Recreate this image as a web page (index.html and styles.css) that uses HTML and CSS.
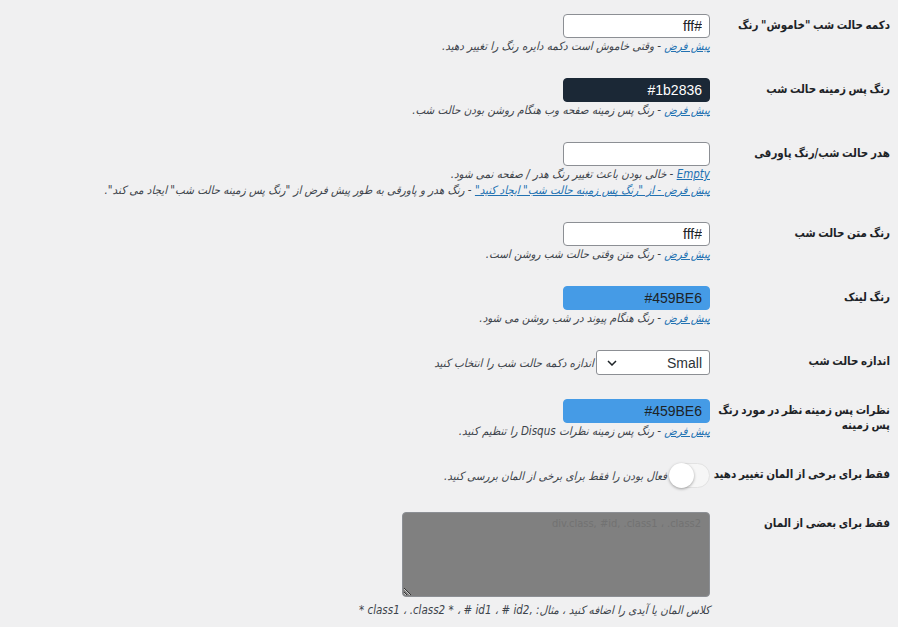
FILE: index.html
```html
<!DOCTYPE html>
<html lang="fa" dir="rtl">
<head>
<meta charset="utf-8">
<title>تنظیمات حالت شب</title>
<link rel="stylesheet" href="styles.css">
</head>
<body>
<div class="form">
  <div class="row">
    <div class="th">دکمه حالت شب "خاموش" رنگ</div>
    <div class="td">
      <input class="field" type="text" value="#fff">
      <p class="desc"><a href="#">پیش فرض</a> - وقتی خاموش است دکمه دایره رنگ را تغییر دهید.</p>
    </div>
  </div>
  <div class="row">
    <div class="th">رنگ پس زمینه حالت شب</div>
    <div class="td">
      <input class="field dark" type="text" value="#1b2836">
      <p class="desc"><a href="#">پیش فرض</a> - رنگ پس زمینه صفحه وب هنگام روشن بودن حالت شب.</p>
    </div>
  </div>
  <div class="row">
    <div class="th">هدر حالت شب/رنگ پاورقی</div>
    <div class="td">
      <input class="field" type="text" value="">
      <p class="desc"><a href="#">Empty</a> - خالی بودن باعث تغییر رنگ هدر / صفحه نمی شود.</p>
      <p class="desc"><a href="#">پیش فرض - از "رنگ پس زمینه حالت شب" ایجاد کنید"</a> - رنگ هدر و پاورقی به طور پیش فرض از "رنگ پس زمینه حالت شب" ایجاد می کند".</p>
    </div>
  </div>
  <div class="row">
    <div class="th">رنگ متن حالت شب</div>
    <div class="td">
      <input class="field" type="text" value="#fff">
      <p class="desc"><a href="#">پیش فرض</a> - رنگ متن وقتی حالت شب روشن است.</p>
    </div>
  </div>
  <div class="row">
    <div class="th">رنگ لینک</div>
    <div class="td">
      <input class="field blue" type="text" value="#459BE6">
      <p class="desc"><a href="#">پیش فرض</a> - رنگ هنگام پیوند در شب روشن می شود.</p>
    </div>
  </div>
  <div class="row">
    <div class="th">اندازه حالت شب</div>
    <div class="td inline">
      <div class="select">
        <span class="select-val">Small</span>
        <svg class="chev" width="10" height="6" viewBox="0 0 10 6"><path d="M1 1 L5 5 L9 1" fill="none" stroke="#1d2327" stroke-width="1.5"/></svg>
      </div>
      <span class="desc side">اندازه دکمه حالت شب را انتخاب کنید</span>
    </div>
  </div>
  <div class="row">
    <div class="th">نظرات پس زمینه نظر در مورد رنگ<br>پس زمینه</div>
    <div class="td">
      <input class="field blue" type="text" value="#459BE6">
      <p class="desc"><a href="#">پیش فرض</a> - رنگ پس زمینه نظرات Disqus را تنظیم کنید.</p>
    </div>
  </div>
  <div class="row">
    <div class="th">فقط برای برخی از المان تغییر دهید</div>
    <div class="td inline">
      <span class="toggle"><span class="knob"></span></span>
      <span class="desc side">فعال بودن را فقط برای برخی از المان بررسی کنید.</span>
    </div>
  </div>
  <div class="row">
    <div class="th">فقط برای بعضی از المان</div>
    <div class="td">
      <textarea class="area" placeholder="div.class, #id, .class1 ، .class2"></textarea>
      <p class="desc last">کلاس المان یا آیدی را اضافه کنید ، مثال: <span dir="ltr">* class1 ، .class2 * ، # id1 ، # id2,</span></p>
    </div>
  </div>
</div>
</body>
</html>
```

FILE: styles.css
```css
html, body {
  margin: 0;
  padding: 0;
  background: #f0f0f1;
}
body {
  direction: rtl;
  font-family: "DejaVu Sans Condensed", "DejaVu Sans", "Liberation Sans", sans-serif;
  color: #1d2327;
  font-size: 13px;
}
.form {
  padding: 2px 8px 0 0;
}
.row {
  display: flex;
  align-items: flex-start;
  padding: 12px 0;
}
.th {
  width: 170px;
  padding-left: 10px;
  padding-top: 4px;
  font-weight: bold;
  font-size: 11.5px;
  line-height: 15px;
  word-spacing: -1px;
  white-space: nowrap;
  flex: none;
}
.td {
  flex: 1;
}
.td.inline {
  display: flex;
  align-items: center;
  gap: 2px;
}
.field {
  display: block;
  box-sizing: border-box;
  width: 147px;
  height: 24px;
  margin: 0;
  padding: 0 7px;
  border: 1px solid #8c8f94;
  border-radius: 4px;
  background: #fff;
  color: #1d2327;
  font-family: "Liberation Sans", sans-serif;
  font-size: 14px;
  direction: rtl;
  text-align: right;
}
.field.dark {
  background: #1b2836;
  color: #fff;
  border-color: #1b2836;
}
.field.blue {
  background: #459be6;
  border-color: #459be6;
  color: #1d2327;
}
.desc {
  margin: 0;
  font-size: 11.5px;
  line-height: 16px;
  font-style: italic;
  color: #3c434a;
}
.desc.last {
  margin-top: 5px;
}
.desc a {
  color: #2271b1;
  text-decoration: underline;
}
.select {
  box-sizing: border-box;
  width: 114px;
  height: 25px;
  border: 1px solid #8c8f94;
  border-radius: 3px;
  background: #fff;
  display: flex;
  align-items: center;
  justify-content: space-between;
  padding: 0 7px 0 10px;
  flex: none;
}
.select-val {
  font-family: "Liberation Sans", sans-serif;
  font-size: 14px;
  color: #2c3338;
}
.chev {
  display: block;
}
.toggle {
  box-sizing: border-box;
  width: 41px;
  height: 25px;
  border: 1px solid #e2e2e2;
  border-radius: 13px;
  background: #f6f6f6;
  display: flex;
  justify-content: flex-end;
  align-items: center;
  flex: none;
}
.knob {
  width: 25px;
  height: 25px;
  border-radius: 50%;
  background: #fff;
  box-shadow: 0 1px 3px rgba(0, 0, 0, 0.35);
  margin-left: -1px;
}
.area {
  display: block;
  box-sizing: border-box;
  width: 308px;
  height: 85px;
  margin: 0;
  border: 1px solid #8c8f94;
  border-radius: 4px;
  background: #808080;
  color: #1d2327;
  padding: 4px 8px;
  font-family: "DejaVu Sans Condensed", "DejaVu Sans", sans-serif;
  font-size: 11px;
  direction: rtl;
}
.area::placeholder {
  color: #727272;
}
```
